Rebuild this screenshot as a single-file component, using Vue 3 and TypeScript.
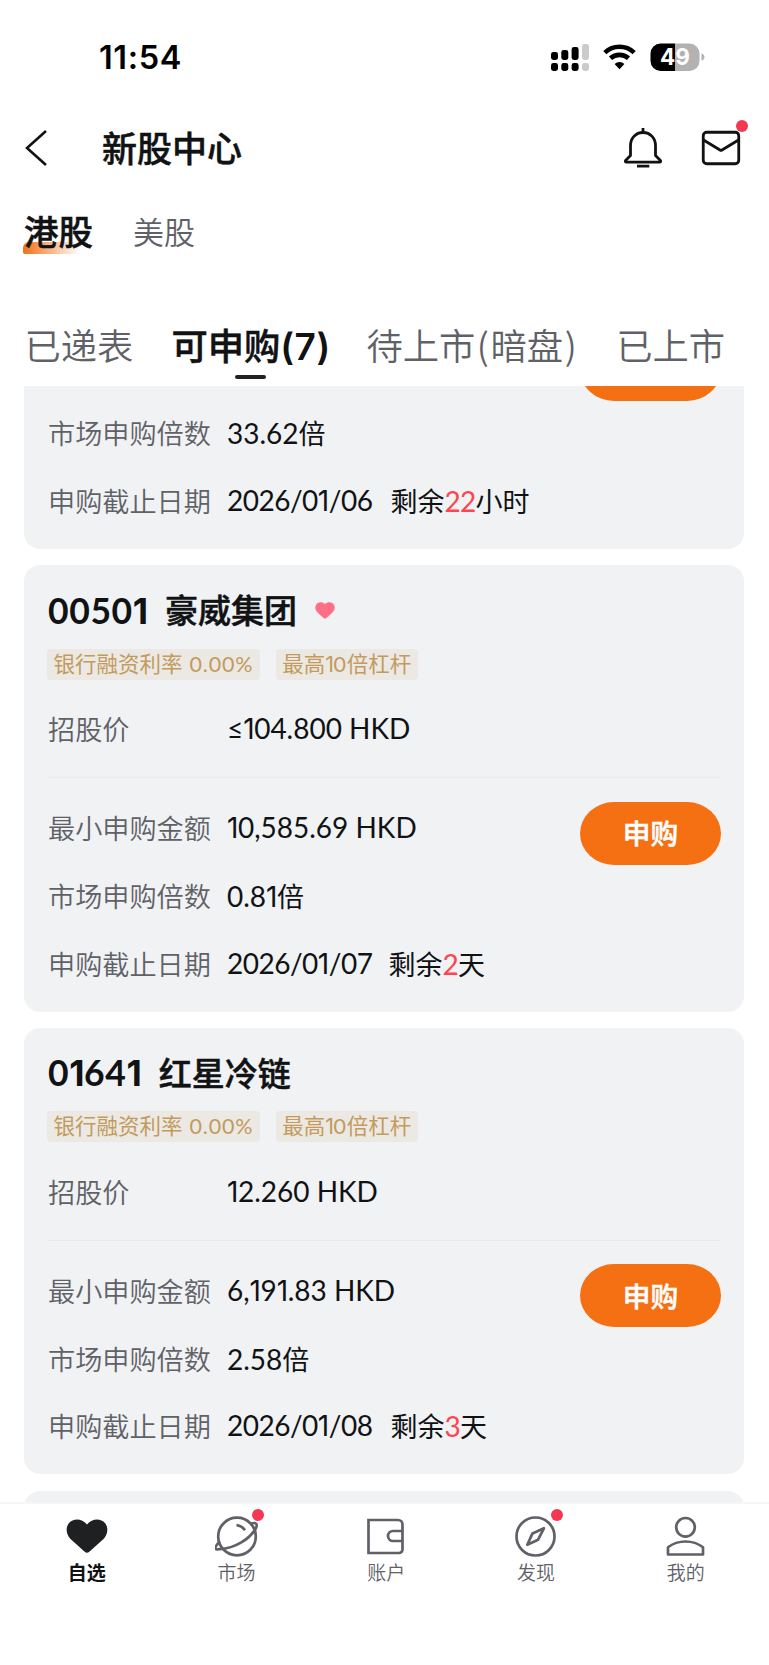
<script setup lang="ts">
import { h } from 'vue'

interface Offering {
  code: string
  name: string
  favorite: boolean
  price: string
  minimum: string
  multiple: string
  deadline: string
  remaining: string
  unit: string
}

const offerings: Offering[] = [
  { code: '00501', name: '豪威集团', favorite: true, price: '≤104.800 HKD', minimum: '10,585.69 HKD', multiple: '0.81', deadline: '2026/01/07', remaining: '2', unit: '天' },
  { code: '01641', name: '红星冷链', favorite: false, price: '12.260 HKD', minimum: '6,191.83 HKD', multiple: '2.58', deadline: '2026/01/08', remaining: '3', unit: '天' },
]

const tags = ['银行融资利率 0.00%', '最高10倍杠杆']

const navItems = [
  { key: 'fav', label: '自选', dot: false },
  { key: 'market', label: '市场', dot: true },
  { key: 'account', label: '账户', dot: false },
  { key: 'discover', label: '发现', dot: true },
  { key: 'mine', label: '我的', dot: false },
]

// Wraps numerals so that "1" and "7" can be set narrow and the rest tracked per context.
const Figures = (props: { text: string }) =>
  h(
    'span',
    { class: 'figures' },
    props.text
      .split(/(1|7|[02-689.%,/]+)/)
      .filter(Boolean)
      .map((part) => {
        if (part === '1') return h('span', { class: 'one' }, part)
        if (part === '7') return h('span', { class: 'seven' }, part)
        return /^[0-9.%,/]/.test(part) ? h('span', { class: 'num' }, part) : part
      }),
  )
Figures.props = ['text']
</script>

<template>
  <div class="screen">
    <header class="status">
      <span class="clock">11:54</span>
      <svg class="indicators" width="156" height="30" viewBox="0 0 156 30">
        <g>
          <rect x="1" y="9" width="7" height="8" rx="2.4" />
          <rect x="11.3" y="7" width="7" height="10" rx="2.4" />
          <rect x="21.6" y="4" width="7" height="13" rx="2.4" />
          <rect x="1" y="20" width="7" height="8" rx="2.4" />
          <rect x="11.3" y="20" width="7" height="8" rx="2.4" />
          <rect x="21.6" y="20" width="7" height="8" rx="2.4" />
        </g>
        <g fill="#cbcbcb">
          <rect x="32" y="1" width="7" height="16" rx="2.4" />
          <rect x="32" y="20" width="7" height="8" rx="2.4" />
        </g>
        <g fill="none" stroke="#000" stroke-width="4.6">
          <path d="M54.8 9.6a21.5 21.5 0 0 1 29.4 0" />
          <path d="M60.5 15.3a13.4 13.4 0 0 1 18 0" />
        </g>
        <path d="M64.6 20.9a7.3 7.3 0 0 1 9.8 0L69.5 26.3z" />
        <path d="M125 .5h-14.500a10 10 0 0 0-10 10v7.500a10 10 0 0 0 10 10h14.500z" />
        <path d="M125 .5h14.500a10 10 0 0 1 10 10v7.500a10 10 0 0 1-10 10h-14.500z" fill="#b2b2b2" />
        <path d="M151.500 10.500c4 1 4 6 0 7z" fill="#b2b2b2" />
        <text x="125" y="22.300" text-anchor="middle" class="charge">49</text>
      </svg>
    </header>

    <div class="titlebar">
      <svg class="back" width="26" height="40" viewBox="0 0 26 40"><path d="M23 3 4 20 23 37" fill="none" stroke="#101214" stroke-width="2.600" /></svg>
      <h1>新股中心</h1>
      <svg class="bell" width="40" height="44" viewBox="0 0 40 44" fill="none" stroke="#101214" stroke-width="2.800">
        <path d="M20 2v5M14 40.200h12.300" />
        <path d="M20 6.500c-7.500 0-12.500 6-12.500 13v10L2.800 34.200c-1 1.200-.4 2 .7 2h33c1.100 0 1.700-.8.700-2L32.500 29.500v-10c0-7-5-13-12.500-13z" stroke-linejoin="round" />
      </svg>
      <div class="mail">
        <svg width="40" height="36" viewBox="0 0 40 36" fill="none" stroke="#101214" stroke-width="2.800">
          <rect x="2.250" y="2.250" width="35.500" height="31.500" rx="3.500" />
          <path d="M2.500 10 19 20q1 .6 2 0L37.500 10" />
        </svg>
        <i class="dot"></i>
      </div>
    </div>

    <nav class="markets">
      <span class="market on">港股</span>
      <span class="market">美股</span>
    </nav>

    <nav class="stages">
      <span>已递表</span>
      <span class="on">可申购<b>(7)</b></span>
      <span>待上市<em>(</em>暗盘<em>)</em></span>
      <span>已上市</span>
    </nav>

    <main class="list">
      <section class="card cut">
        <div class="lines">
          <div class="line"><label>市场申购倍数</label><span class="value"><Figures text="33.62" /><i>倍</i></span></div>
          <div class="line"><label>申购截止日期</label><span class="value date"><Figures text="2026/01/06" /></span><span class="left">剩余<b>22</b>小时</span></div>
        </div>
        <div class="button-edge"></div>
      </section>

      <section v-for="item in offerings" :key="item.code" class="card">
        <h2>
          <span class="code"><Figures :text="item.code" /></span><span>{{ item.name }}</span>
          <svg v-if="item.favorite" width="20" height="17" viewBox="0 0 20 17"><path d="M10 2.200C7.500-.6 3.200-.2 1.400 2.200-.7 5.200.3 8.500 3.200 11.200l5.600 5q1.200.9 2.400 0l5.600-5c2.900-2.700 3.900-6 1.800-9C16.800-.2 12.500-.6 10 2.200z" fill="#ff7086" /></svg>
        </h2>
        <div class="tags"><span v-for="tag in tags" :key="tag" class="tag"><Figures :text="tag" /></span></div>
        <div class="line price"><label>招股价</label><span class="value"><Figures :text="item.price" /></span></div>
        <div class="detail">
          <div class="lines">
            <div class="line"><label>最小申购金额</label><span class="value"><Figures :text="item.minimum" /></span></div>
            <div class="line"><label>市场申购倍数</label><span class="value"><Figures :text="item.multiple" /><i>倍</i></span></div>
            <div class="line"><label>申购截止日期</label><span class="value date"><Figures :text="item.deadline" /></span><span class="left">剩余<b>{{ item.remaining }}</b>{{ item.unit }}</span></div>
          </div>
          <button type="button">申购</button>
        </div>
      </section>

      <section class="card next"></section>
    </main>

    <footer class="tabbar">
      <div v-for="item in navItems" :key="item.key" class="tab" :class="{ on: item.key === 'fav' }">
        <div class="icon">
          <svg width="44" height="42" viewBox="0 0 44 42" fill="none" stroke="#606167" stroke-width="2.700">
            <path v-if="item.key === 'fav'" d="M22 7.500C16.500.8 8 1.500 4 6 0 11 1.500 18 5.500 22L19.700 34.700q2.300 2 4.600 0L38.500 22c4-4 5.500-11 1.500-16C36 1.500 27.500.8 22 7.500z" transform="translate(0 1)" fill="#1e2022" stroke="none" />
            <template v-else-if="item.key === 'market'">
              <circle cx="22" cy="20.500" r="18.800" />
              <path d="M21.500 9.200q5 .4 8.500 5M4.800 25.500C-1 31.500 -1.500 34 4.500 33.200 20 32.500 35 23 41 12 43 7.500 40.500 6 35.800 7.800" />
            </template>
            <template v-else-if="item.key === 'account'">
              <path d="M4.500 4h29.500a4.500 4.500 0 0 1 4.500 4.500v25a3.500 3.500 0 0 1-3.500 3.500H4.500zM38.500 15H29a5 5 0 0 0 0 10h9.500" />
            </template>
            <template v-else-if="item.key === 'discover'">
              <circle cx="21.500" cy="20.500" r="19" />
              <path d="M29.900 12.300 18.500 17.400 13.300 28.800 24.100 23.700z" stroke-linejoin="round" />
            </template>
            <template v-else>
              <circle cx="21.500" cy="11.300" r="9.300" />
              <path d="M4 38.500v-7.200c10-7.700 25-7.700 35 0v7.200z" stroke-linejoin="round" />
            </template>
          </svg>
          <i v-if="item.dot" class="dot"></i>
        </div>
        <span>{{ item.label }}</span>
      </div>
    </footer>
  </div>
</template>

<style>
body { margin: 0; background: #fff; }
.figures .one { font-family: "Inter", sans-serif; margin-right: -.5px; }
.figures .seven { letter-spacing: -2.500px; }
.figures .num { letter-spacing: var(--num-tracking, 0); }
</style>

<style scoped>
* { box-sizing: border-box; }
i, em { font-style: normal; }
.screen { width: 769px; height: 1665px; overflow: hidden; background: #fff; color: #101214; font-family: "Lato", "Noto Sans CJK SC", sans-serif; display: flex; flex-direction: column; }
.status { height: 104px; display: flex; justify-content: space-between; align-items: flex-start; padding: 43px 63px 0 99px; flex: none; }
.clock { font: 600 32.500px/30px "Inter", sans-serif; letter-spacing: .6px; color: #000; }
.charge { font: 700 22.500px "Inter", sans-serif; fill: #fff; }
.titlebar { height: 88px; flex: none; display: flex; align-items: center; padding: 0 28px 0 23px; }
h1 { margin: 0 auto 0 53px; font-size: 35px; line-height: 50px; font-weight: 500; -webkit-text-stroke: .5px currentColor; }
.bell { margin-right: 38px; }
.mail { position: relative; width: 40px; height: 36px; }
.dot { position: absolute; width: 12px; height: 12px; border-radius: 50%; background: #f43852; }
.mail .dot { right: -7px; top: -10px; }
.markets { height: 84px; flex: none; display: flex; align-items: center; padding: 0 24px; gap: 40px; margin-top: -2px; }
.market { font-size: 31px; line-height: 44px; font-weight: 350; color: #606167; position: relative; }
.market.on { font-size: 34.500px; color: #101214; font-weight: 500; -webkit-text-stroke: .5px currentColor; z-index: 0; }
.market.on::before { content: ""; position: absolute; z-index: -1; left: -1px; top: 32px; width: 57px; height: 12px; border-radius: 6px 0 0 2px; background: linear-gradient(90deg, #f47016, rgba(244, 112, 22, 0)); }
.stages { height: 112px; flex: none; display: flex; align-items: flex-end; padding: 0 0 14px 24.500px; gap: 38px; font-size: 36.300px; line-height: 52px; font-weight: 350; color: #606167; white-space: nowrap; }
.stages .on { color: #101214; font-weight: 500; -webkit-text-stroke: .5px currentColor; position: relative; width: 157px; }
.stages .on b { font: 600 37px/40px "Inter", sans-serif; letter-spacing: .5px; -webkit-text-stroke: 0; }
.stages .on::after { content: ""; position: absolute; left: 50%; margin-left: -15px; bottom: -7px; width: 31px; height: 4px; border-radius: 2px; background: #202224; }
.stages em { display: inline-block; width: 15.200px; text-align: center; font-family: "Noto Sans CJK SC", sans-serif; }
.list { height: 1116px; flex: none; overflow: hidden; padding: 0 25px 0 24px; display: flex; flex-direction: column; gap: 16.200px; }
.card { height: 446.500px; flex: none; border-radius: 16px; background: #f1f2f4; padding: 24px 23px 13px 24px; }
.card.cut { height: 163px; padding-top: 13.700px; border-radius: 0 0 16px 16px; display: flex; justify-content: space-between; }
.button-edge { width: 141px; height: 63px; margin-top: -61.700px; border-radius: 34px / 31.500px; background: #f57012; clip-path: inset(48px 0 0); }
h2 { margin: 0; height: 43px; display: flex; align-items: center; font-size: 33px; line-height: 43px; font-weight: 500; -webkit-text-stroke: .5px currentColor; }
.code { font-size: 35.500px; font-weight: 700; margin-right: 17.500px; -webkit-text-stroke: 0; --num-tracking: .6px; }
h2 svg { margin-left: 18px; }
.tags { display: flex; gap: 16px; margin: 16.450px 0 0 -1px; }
.tag { height: 31px; line-height: 30px; padding: 0 6.500px; border-radius: 4px; background: #ece9e4; color: #c29b5d; font-size: 21.500px; white-space: nowrap; word-spacing: 1.500px; font-weight: 400; --num-tracking: .8px; }
.line { height: 67.700px; display: flex; align-items: center; padding-bottom: 1.500px; font-size: 27px; white-space: nowrap; }
.line label { width: 179px; color: #606167; font-weight: 350; font-size: 27.150px; }
.value { font-size: 28px; --num-tracking: 0; }
.value i { font-size: 27px; }
.date { --num-tracking: -.5px; }
.left { margin-left: 18px; }
.left b { font-weight: 400; color: #ff4450; font-size: 28px; letter-spacing: -.7px; }
.price { margin-top: 16px; }
.detail { margin-top: 14px; margin-left: -1px; padding: 16.300px 0 0 1px; border-top: 1px solid #e9eaec; display: flex; justify-content: space-between; align-items: flex-start; }
button { margin: 7.200px 0 0; width: 141px; height: 63px; border: 0; border-radius: 34px / 31.500px; background: #f57012; color: #fff; font: 500 27.700px/60px "Noto Sans CJK SC", sans-serif; -webkit-text-stroke: .5px currentColor; padding: 0 0 2px; }
.tabbar { flex: none; height: 163px; position: relative; border-top: 2px solid #f6f6f7; background: #fff; display: flex; padding: 12px 8.500px 0 12px; }
.tab { flex: 1; display: flex; flex-direction: column; align-items: center; font-size: 19px; line-height: 28px; color: #606167; font-weight: 350; }
.tab.on { color: #101214; font-weight: 700; }
.icon { position: relative; width: 44px; height: 42px; margin-bottom: 1px; }
.icon .dot { right: -5px; top: -7px; }
</style>
